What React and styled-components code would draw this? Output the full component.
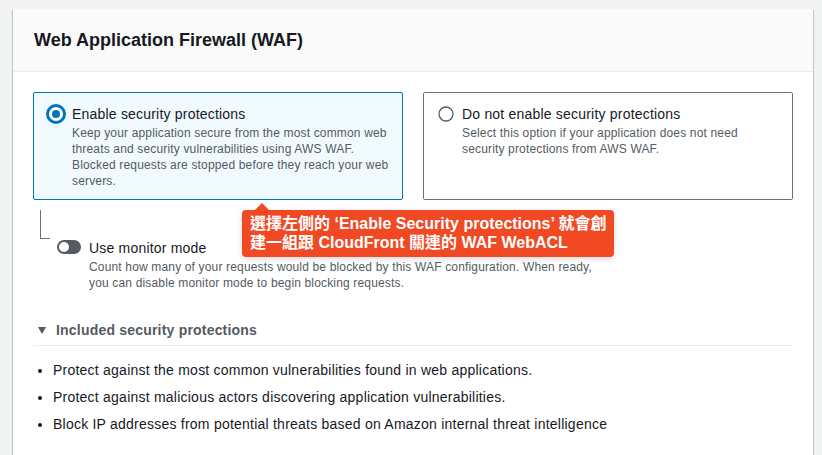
import React from "react";
import styled, { createGlobalStyle } from "styled-components";

const Global = createGlobalStyle`
  html, body { margin: 0; padding: 0; background: #f2f3f3; }
  body { font-family: "Liberation Sans", Arial, sans-serif; color: #16191f; }
  * { box-sizing: border-box; }
`;

const Page = styled.div`
  padding: 9px 9px 0 13px;
  height: 455px;
  overflow: hidden;
`;

const Container = styled.section`
  width: 800px;
  background: #fff;
  box-shadow: 0 1px 1px 0 rgba(0, 28, 36, 0.3), 1px 1px 1px 0 rgba(0, 28, 36, 0.15),
    -1px 1px 1px 0 rgba(0, 28, 36, 0.15);
`;

const Header = styled.header`
  background: #fafafa;
  border-bottom: 1px solid #eaeded;
  padding: 20px 21px;
`;

const Title = styled.h2`
  margin: 0;
  font-size: 18px;
  line-height: 22px;
  font-weight: 700;
  color: #16191f;
`;

const Body = styled.div`
  padding: 20px;
`;

const Tiles = styled.div`
  display: grid;
  grid-template-columns: 1fr 1fr;
  gap: 20px;
`;

const Tile = styled.label`
  display: flex;
  gap: 6px;
  padding: 11px 6px 10px 12px;
  border: 1px solid ${(p) => (p.$selected ? "#0073bb" : "#687078")};
  background: ${(p) => (p.$selected ? "#f1faff" : "#fff")};
  border-radius: 2px;
  min-height: 107px;
`;

const RadioSlot = styled.span`
  flex: 0 0 20px;
  height: 20px;
  display: flex;
  align-items: center;
  justify-content: center;
`;

const TileText = styled.div`
  display: flex;
  flex-direction: column;
`;

const Label = styled.span`
  font-size: 14px;
  line-height: 20px;
  letter-spacing: 0.2px;
  margin-bottom: 1px;
  color: #16191f;
`;

const Desc = styled.span`
  font-size: 12px;
  line-height: 16px;
  letter-spacing: 0.16px;
  color: #545b64;
`;

const MonitorRow = styled.div`
  position: relative;
  display: flex;
  align-items: flex-start;
  margin-top: 10px;
`;

const Connector = styled.span`
  margin-left: 7px;
  width: 10px;
  height: 29px;
  border-left: 1px solid #687078;
  border-bottom: 1px solid #687078;
`;

const Toggle = styled.span`
  margin-left: 7px;
  margin-top: 30px;
  width: 24px;
  height: 14px;
  border-radius: 7px;
  background: #545b64;
  display: flex;
  align-items: center;
  padding-left: 2px;
  &::after {
    content: "";
    width: 10px;
    height: 10px;
    border-radius: 50%;
    background: #fff;
  }
`;

const MonitorText = styled.div`
  margin-left: 8px;
  margin-top: 28px;
  display: flex;
  flex-direction: column;
`;

const Callout = styled.div`
  position: absolute;
  top: 0;
  left: 209px;
  white-space: nowrap;
  padding: 4px 7px 5px 8px;
  background: #f04923;
  color: #fff;
  border-radius: 4px;
  font-family: "Liberation Sans", "Noto Sans CJK TC", sans-serif;
  font-weight: 700;
  font-size: 16px;
  line-height: 19px;
  box-shadow: 0 2px 6px rgba(0, 0, 0, 0.15);
  &::before {
    content: "";
    position: absolute;
    top: -7px;
    left: 13px;
    border-left: 7px solid transparent;
    border-right: 7px solid transparent;
    border-bottom: 7px solid #f04923;
  }
`;

const Expander = styled.div`
  margin-top: 29px;
  display: flex;
  align-items: center;
  gap: 10px;
  padding: 0 0 5px 5px;
  border-bottom: 1px solid #eaeded;
  font-size: 14px;
  line-height: 20px;
  letter-spacing: 0.2px;
  font-weight: 700;
  color: #545b64;
`;

const Caret = styled.span`
  width: 0;
  height: 0;
  border-left: 4px solid transparent;
  border-right: 4px solid transparent;
  border-top: 7px solid #545b64;
`;

const List = styled.ul`
  margin: 14px 0 0 0;
  padding-left: 20px;
  font-size: 14px;
  line-height: 20px;
  letter-spacing: 0.23px;
  color: #16191f;
`;

const Item = styled.li`
  margin-bottom: 7px;
`;

const Radio = ({ checked }) =>
  checked ? (
    <svg width="20" height="20" viewBox="0 0 20 20">
      <circle cx="10" cy="10" r="8.5" fill="#fff" stroke="#0073bb" strokeWidth="3" />
      <circle cx="10" cy="10" r="4" fill="#0073bb" />
    </svg>
  ) : (
    <svg width="16" height="16" viewBox="0 0 16 16">
      <circle cx="8" cy="8" r="7" fill="#fff" stroke="#545b64" strokeWidth="1.3" />
    </svg>
  );

export default function App() {
  return (
    <Page>
      <Global />
      <Container>
        <Header>
          <Title>Web Application Firewall (WAF)</Title>
        </Header>
        <Body>
          <Tiles>
            <Tile $selected>
              <RadioSlot>
                <Radio checked />
              </RadioSlot>
              <TileText>
                <Label>Enable security protections</Label>
                <Desc>
                  Keep your application secure from the most common web threats and security
                  vulnerabilities using AWS WAF. Blocked requests are stopped before they reach
                  your web servers.
                </Desc>
              </TileText>
            </Tile>
            <Tile>
              <RadioSlot>
                <Radio />
              </RadioSlot>
              <TileText>
                <Label>Do not enable security protections</Label>
                <Desc>
                  Select this option if your application does not need
                  <br />
                  security protections from AWS WAF.
                </Desc>
              </TileText>
            </Tile>
          </Tiles>
          <MonitorRow>
            <Connector />
            <Toggle />
            <MonitorText>
              <Label>Use monitor mode</Label>
              <Desc>
                Count how many of your requests would be blocked by this WAF configuration. When
                ready,
                <br />
                you can disable monitor mode to begin blocking requests.
              </Desc>
            </MonitorText>
            <Callout>
              選擇左側的 ‘Enable Security protections’ 就會創
              <br />
              建一組跟 CloudFront 關連的 WAF WebACL
            </Callout>
          </MonitorRow>
          <Expander>
            <Caret />
            Included security protections
          </Expander>
          <List>
            <Item>Protect against the most common vulnerabilities found in web applications.</Item>
            <Item>Protect against malicious actors discovering application vulnerabilities.</Item>
            <Item>Block IP addresses from potential threats based on Amazon internal threat intelligence</Item>
          </List>
        </Body>
      </Container>
    </Page>
  );
}
